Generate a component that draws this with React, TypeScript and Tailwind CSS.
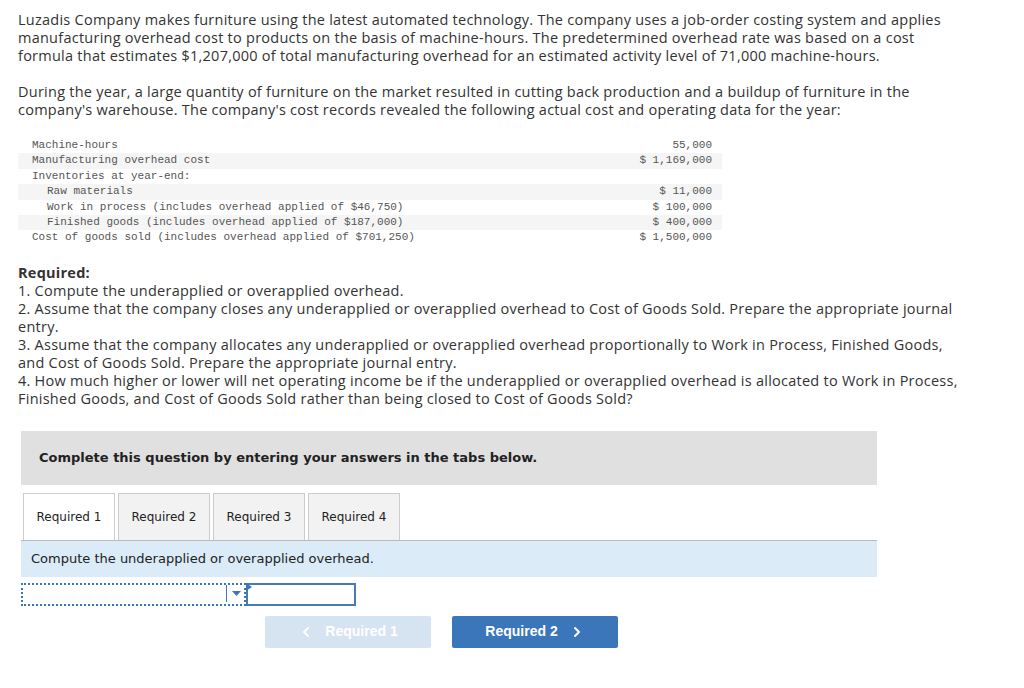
import React from "react";
import { ChevronLeft, ChevronRight } from "lucide-react";

const rows = [
  { label: "Machine-hours", value: "55,000", indent: false, shade: false },
  { label: "Manufacturing overhead cost", value: "$ 1,169,000", indent: false, shade: true },
  { label: "Inventories at year-end:", value: "", indent: false, shade: false },
  { label: "Raw materials", value: "$ 11,000", indent: true, shade: true },
  { label: "Work in process (includes overhead applied of $46,750)", value: "$ 100,000", indent: true, shade: false },
  { label: "Finished goods (includes overhead applied of $187,000)", value: "$ 400,000", indent: true, shade: true },
  { label: "Cost of goods sold (includes overhead applied of $701,250)", value: "$ 1,500,000", indent: false, shade: false },
];

const tabs = ["Required 1", "Required 2", "Required 3", "Required 4"];

const Line = ({ children }: { children: React.ReactNode }) => (
  <div className="whitespace-nowrap">{children}</div>
);

export default function App() {
  return (
    <div className="w-[1024px] h-[688px] bg-white overflow-hidden pl-[18px] pt-[11px] text-[#333]">
      {/* Problem text */}
      <div className="font-['Open_Sans',sans-serif] text-[14.5px] tracking-[0.25px] leading-[18px]">
        <Line>Luzadis Company makes furniture using the latest automated technology. The company uses a job-order costing system and applies</Line>
        <Line>manufacturing overhead cost to products on the basis of machine-hours. The predetermined overhead rate was based on a cost</Line>
        <Line>formula that estimates $1,207,000 of total manufacturing overhead for an estimated activity level of 71,000 machine-hours.</Line>
        <div className="h-[18px]" />
        <Line>During the year, a large quantity of furniture on the market resulted in cutting back production and a buildup of furniture in the</Line>
        <Line>company's warehouse. The company's cost records revealed the following actual cost and operating data for the year:</Line>
      </div>

      {/* Data table */}
      <div className="mt-[19px] w-[704px] font-['Liberation_Mono',monospace] text-[11px] text-[#555]">
        {rows.map((r) => (
          <div
            key={r.label}
            className={`flex justify-between h-[15.4px] leading-[15.4px] pr-[10px] ${r.shade ? "bg-[#f5f5f5]" : ""}`}
          >
            <span className={r.indent ? "pl-[29px]" : "pl-[14px]"}>{r.label}</span>
            <span>{r.value}</span>
          </div>
        ))}
      </div>

      {/* Required */}
      <div className="mt-[18px] font-['Open_Sans',sans-serif] text-[14.5px] tracking-[0.25px] leading-[18px]">
        <Line><span className="font-bold">Required:</span></Line>
        <Line>1. Compute the underapplied or overapplied overhead.</Line>
        <Line>2. Assume that the company closes any underapplied or overapplied overhead to Cost of Goods Sold. Prepare the appropriate journal</Line>
        <Line>entry.</Line>
        <Line>3. Assume that the company allocates any underapplied or overapplied overhead proportionally to Work in Process, Finished Goods,</Line>
        <Line>and Cost of Goods Sold. Prepare the appropriate journal entry.</Line>
        <Line>4. How much higher or lower will net operating income be if the underapplied or overapplied overhead is allocated to Work in Process,</Line>
        <Line>Finished Goods, and Cost of Goods Sold rather than being closed to Cost of Goods Sold?</Line>
      </div>

      {/* Answer area */}
      <div className="mt-[23px] ml-[3px] w-[856px] font-['DejaVu_Sans',sans-serif] text-[#222]">
        <div className="h-[54px] bg-[#e0e0e0] flex items-center pl-[18px] text-[13px] font-bold">
          Complete this question by entering your answers in the tabs below.
        </div>

        <div className="mt-[8px] flex gap-[3px] pl-[2px] border-b border-[#bbb]">
          {tabs.map((t, i) => (
            <div
              key={t}
              className={`w-[92px] h-[47px] flex items-center justify-center text-[12px] border border-b-0 border-[#ccc] ${
                i === 0 ? "bg-white -mb-px" : "bg-[#f2f2f2]"
              }`}
            >
              {t}
            </div>
          ))}
        </div>

        <div className="h-[36px] bg-[#dbebf8] flex items-center pl-[10px] text-[13px]">
          Compute the underapplied or overapplied overhead.
        </div>

        <div className="mt-[6px] flex items-center">
          <div className="relative w-[225px] h-[23px] border-2 border-dotted border-[#3a76b9] bg-white">
            <div className="absolute right-[17px] top-0 h-[17px] w-px bg-[#3a76b9]" />
            <svg className="absolute right-[3px] top-[6px]" width="9" height="5" viewBox="0 0 9 5">
              <path d="M0 0 L9 0 L4.5 5 Z" fill="#3a76b9" />
            </svg>
          </div>
          <div className="relative w-[110px] h-[23px] border-2 border-[#4a7ab0] bg-white">
            <svg className="absolute -left-[2px] -top-[2px]" width="6" height="8" viewBox="0 0 6 8">
              <path d="M0 0 L6 4 L0 8 Z" fill="#3a76b9" />
            </svg>
          </div>
        </div>

        <div className="mt-[10px] flex gap-[21px] pl-[244px] font-['Liberation_Sans',sans-serif]">
          <div className="w-[166px] h-[32px] rounded-[2px] bg-[#d6e3f1] text-white font-bold text-[14px] flex items-center justify-center gap-[11px]">
            <ChevronLeft className="w-[16px] h-[16px]" strokeWidth={3} />
            <span>Required 1</span>
          </div>
          <div className="w-[166px] h-[32px] rounded-[2px] bg-[#3a76b9] text-white font-bold text-[14px] flex items-center justify-center gap-[11px]">
            <span>Required 2</span>
            <ChevronRight className="w-[16px] h-[16px]" strokeWidth={3} />
          </div>
        </div>
      </div>
    </div>
  );
}
